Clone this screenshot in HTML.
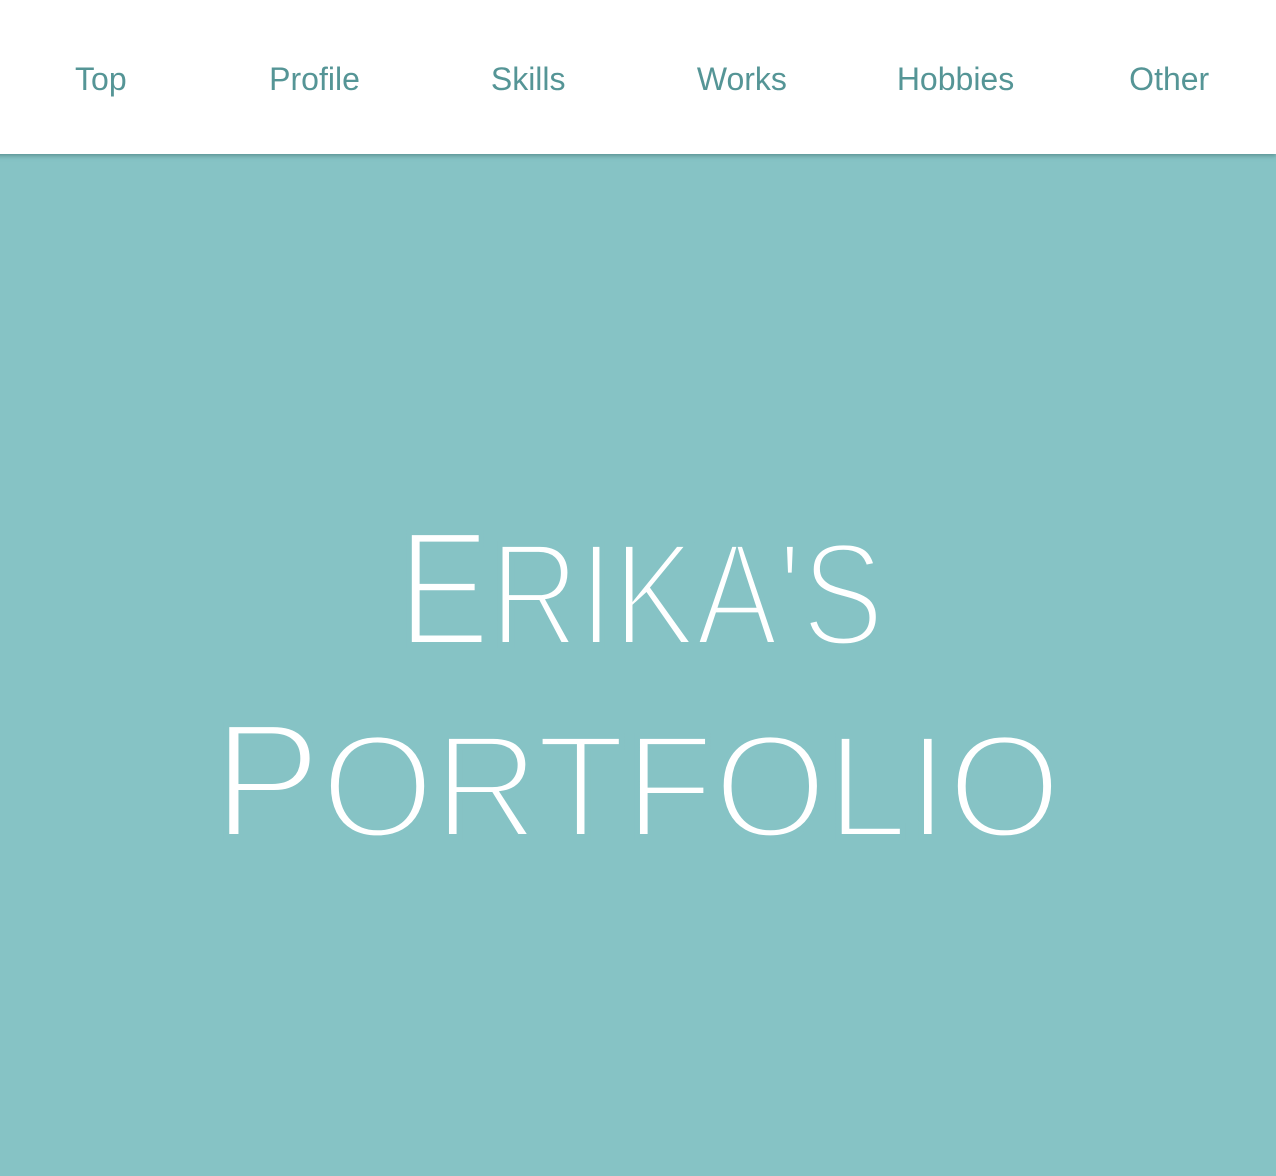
<!DOCTYPE html>
<html><head><meta charset="utf-8"><style>
html,body{margin:0;padding:0;width:1276px;height:1176px;overflow:hidden;background:#86c3c5;}
nav{position:absolute;left:-6px;top:0;width:1282px;height:154px;background:#fff;box-shadow:0 2px 4px rgba(60,110,110,.55);display:flex;z-index:2}
nav a{flex:1;text-align:center;font-family:"Liberation Sans",sans-serif;font-size:32px;color:#559596;text-decoration:none;line-height:158px;}
svg{position:absolute;left:0;top:0}
</style></head><body>
<nav><a>Top</a><a>Profile</a><a>Skills</a><a>Works</a><a>Hobbies</a><a>Other</a></nav>
<svg width="1276" height="1176">
<g fill="#fff" stroke="#86c3c5" stroke-width="6" font-family="Liberation Sans, sans-serif">
<text x="398" y="645" textLength="486" lengthAdjust="spacingAndGlyphs"><tspan font-size="164">E</tspan><tspan font-size="147">RIKA'S</tspan></text>
<text x="213" y="837" textLength="848" lengthAdjust="spacingAndGlyphs"><tspan font-size="164">P</tspan><tspan font-size="147">ORTFOLIO</tspan></text>
</g></svg>
</body></html>
